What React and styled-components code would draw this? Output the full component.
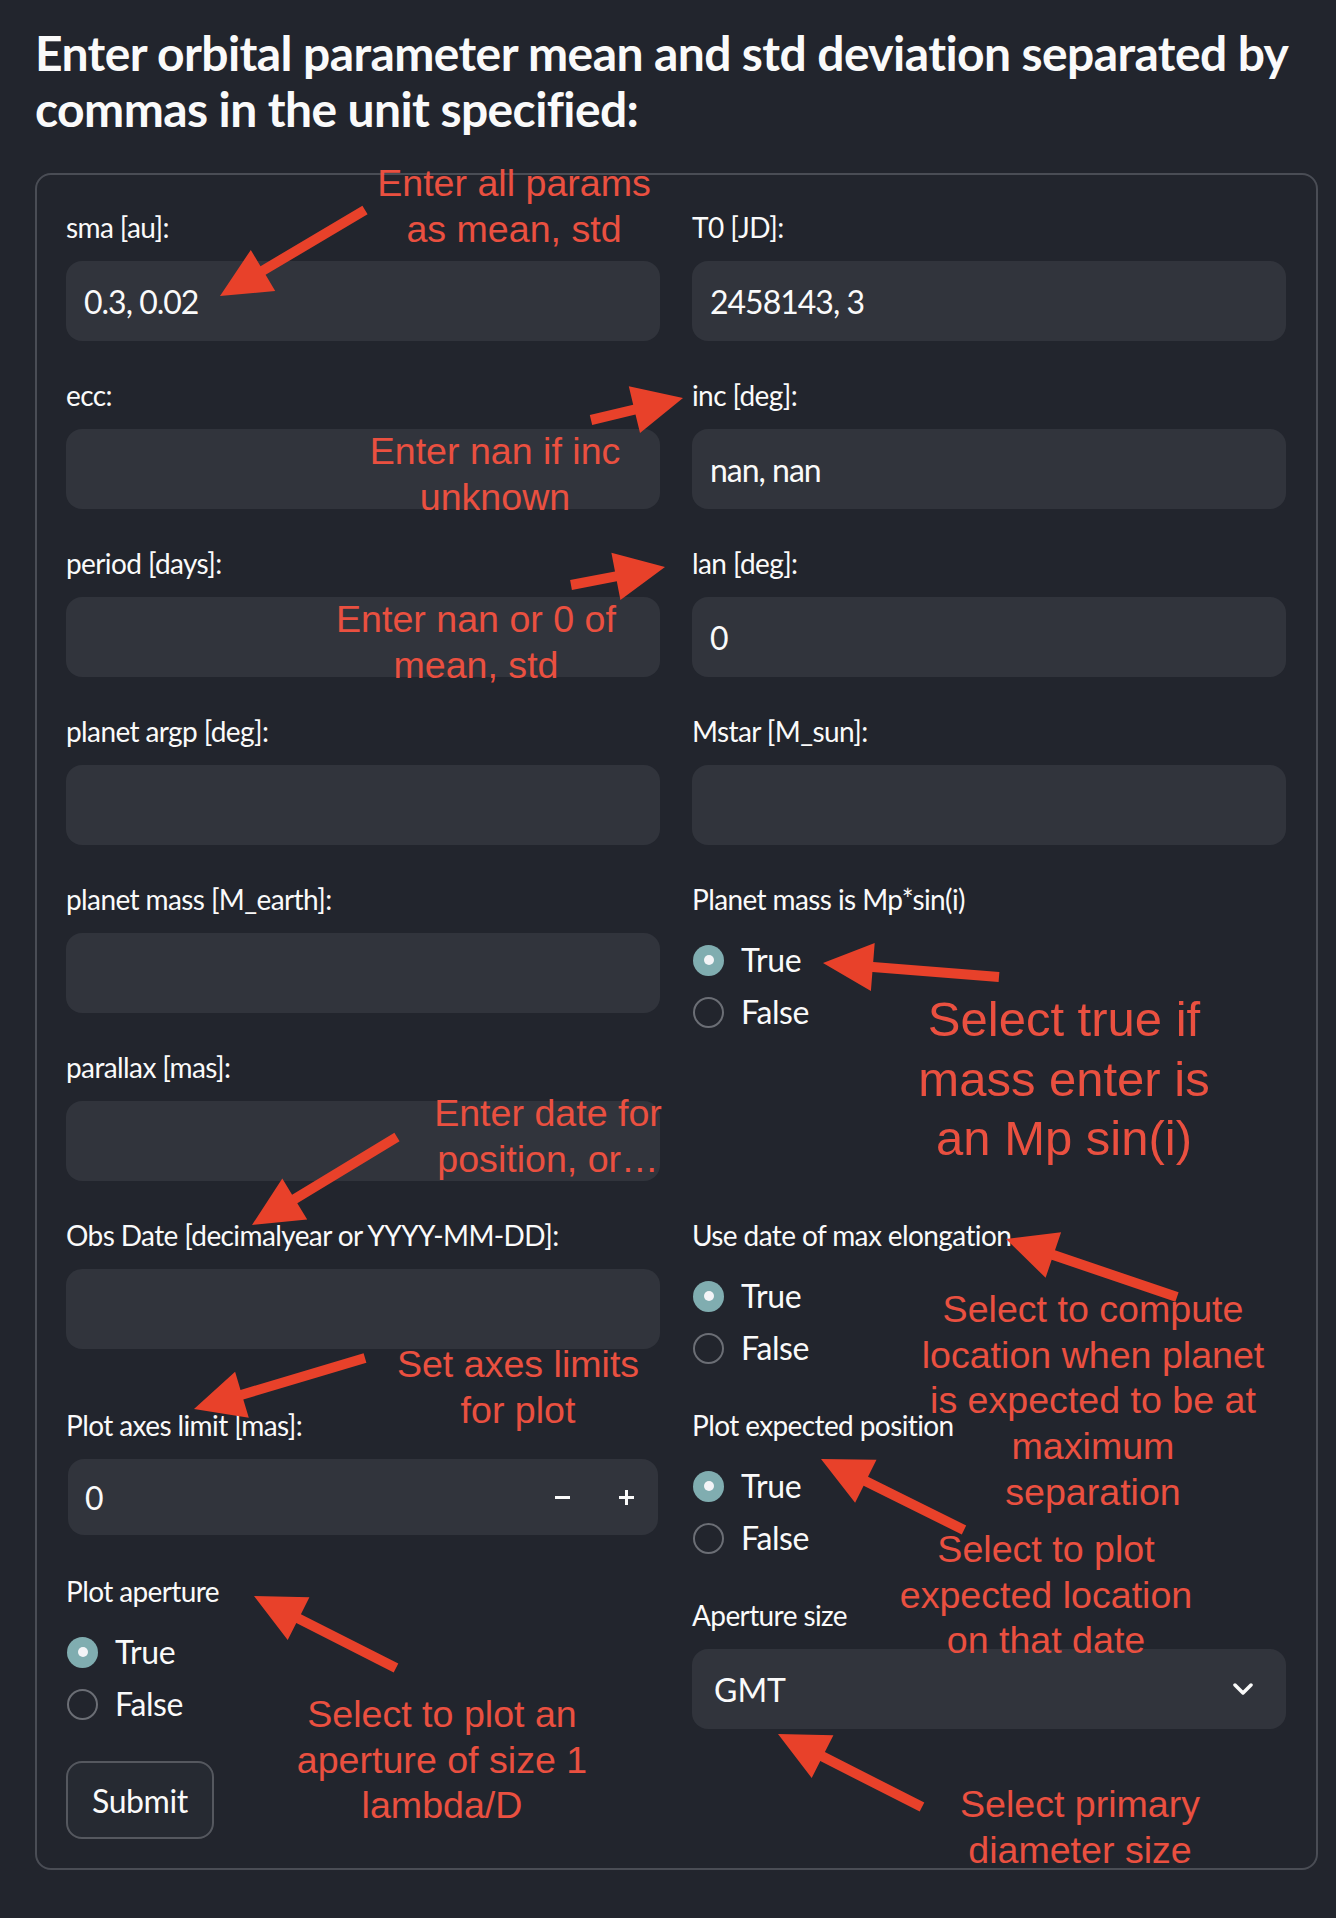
import React from 'react';
import styled, { createGlobalStyle } from 'styled-components';

const GlobalStyle = createGlobalStyle`
  html, body {
    margin: 0;
    padding: 0;
    background: #22252d;
  }
  body {
    font-family: Lato, "Noto Sans", sans-serif;
    color: #fafafa;
  }
  * {
    box-sizing: border-box;
  }
`;

const Page = styled.div`
  position: relative;
  width: 1336px;
  min-height: 1918px;
  padding: 25px 18px 0 35px;
`;

const Title = styled.h3`
  margin: 0 0 36px;
  font-size: 48px;
  line-height: 56px;
  font-weight: 700;
  letter-spacing: -0.6px;
  white-space: nowrap;
`;

const Form = styled.form`
  display: flex;
  flex-direction: column;
  gap: 32px;
  padding: 30px 30px 29px 29px;
  border: 2px solid #4a4d55;
  border-radius: 16px;
`;

const Columns = styled.div`
  display: grid;
  grid-template-columns: 1fr 1fr;
  column-gap: 32px;
  align-items: start;
`;

const Column = styled.div`
  display: flex;
  flex-direction: column;
  gap: 32px;
  min-width: 0;
`;

const Label = styled.div`
  height: 44px;
  margin-bottom: 12px;
  font-size: 28px;
  line-height: 44px;
  letter-spacing: -0.6px;
  white-space: nowrap;
`;

const TextBox = styled.input`
  display: block;
  width: 100%;
  height: 80px;
  padding: 0 18px;
  border: none;
  border-radius: 16px;
  outline: none;
  background: #31343c;
  color: #fafafa;
  font-family: inherit;
  font-size: 32px;
  letter-spacing: -1px;
`;

const NumberBox = styled.div`
  display: flex;
  align-items: center;
  height: 76px;
  margin: 2px;
  padding-left: 17px;
  border-radius: 16px;
  background: #31343c;
`;

const NumberValue = styled.span`
  flex: 1;
  font-size: 32px;
`;

const StepButton = styled.button`
  display: flex;
  align-items: center;
  justify-content: center;
  width: 64px;
  height: 100%;
  padding: 0;
  border: none;
  background: transparent;
  color: #fafafa;
`;

const SelectBox = styled.div`
  display: flex;
  align-items: center;
  justify-content: space-between;
  height: 80px;
  padding: 0 33px 0 22px;
  border-radius: 16px;
  background: #31343c;
  font-size: 32px;
`;

const Options = styled.div`
  display: flex;
  flex-direction: column;
  gap: 6px;
  padding-top: 4px;
`;

const Option = styled.div`
  display: flex;
  align-items: center;
  height: 46px;
  font-size: 32px;
  line-height: 46px;
  letter-spacing: -0.4px;
`;

const Dot = styled.span`
  display: flex;
  align-items: center;
  justify-content: center;
  flex: none;
  width: 31px;
  height: 31px;
  margin: 0 17px 0 1px;
  border-radius: 50%;
  border: ${(p) => (p.$on ? 'none' : '2px solid #6b6e75')};
  background: ${(p) => (p.$on ? '#80adb0' : 'transparent')};

  &::after {
    content: '';
    display: ${(p) => (p.$on ? 'block' : 'none')};
    width: 10px;
    height: 10px;
    border-radius: 50%;
    background: #f3f4f7;
  }
`;

const SubmitButton = styled.button`
  align-self: flex-start;
  height: 78px;
  padding: 0 24px;
  border: 2px solid #55585f;
  border-radius: 16px;
  background: #262a32;
  color: #fafafa;
  font-family: inherit;
  font-size: 32px;
  letter-spacing: -0.4px;
`;

const Overlay = styled.svg`
  position: absolute;
  left: 0;
  top: 0;
  pointer-events: none;
`;

const Note = styled.div`
  position: absolute;
  left: ${(p) => p.$x}px;
  top: ${(p) => p.$y}px;
  transform: translateX(-50%);
  font-family: "Liberation Sans", Arial, sans-serif;
  font-size: ${(p) => (p.$big ? '49px' : '37.6px')};
  line-height: ${(p) => (p.$big ? '59.5px' : '45.7px')};
  color: #ea5040;
  text-align: center;
  white-space: nowrap;
  pointer-events: none;
`;

const notes = [
  { x: 514, y: 161, lines: ['Enter all params', 'as mean, std'] },
  { x: 495, y: 429, lines: ['Enter nan if inc', 'unknown'] },
  { x: 476, y: 597, lines: ['Enter nan or 0 of', 'mean, std'] },
  { x: 1064, y: 990, big: true, lines: ['Select true if', 'mass enter is', 'an Mp sin(i)'] },
  { x: 548, y: 1091, lines: ['Enter date for', 'position, or…'] },
  {
    x: 1093,
    y: 1287,
    lines: ['Select to compute', 'location when planet', 'is expected to be at', 'maximum', 'separation'],
  },
  { x: 518, y: 1342, lines: ['Set axes limits', 'for plot'] },
  { x: 1046, y: 1527, lines: ['Select to plot', 'expected location', 'on that date'] },
  { x: 442, y: 1692, lines: ['Select to plot an', 'aperture of size 1', 'lambda/D'] },
  { x: 1080, y: 1782, lines: ['Select primary', 'diameter size'] },
];

// tail -> tip, in page pixels
const arrows = [
  [365, 210, 220, 296],
  [591, 420, 683, 398],
  [571, 585, 665, 567],
  [999, 977, 823, 963],
  [397, 1137, 252, 1225],
  [1177, 1297, 1006, 1239],
  [365, 1358, 194, 1409],
  [964, 1530, 821, 1459],
  [396, 1668, 254, 1596],
  [922, 1807, 778, 1734],
];

const arrowPoints = ([x1, y1, x2, y2]) => {
  const len = Math.hypot(x2 - x1, y2 - y1);
  const ux = (x2 - x1) / len;
  const uy = (y2 - y1) / len;
  const nx = -uy;
  const ny = ux;
  const head = 50;
  const half = 24;
  const shaft = 5;
  const bx = x2 - ux * head;
  const by = y2 - uy * head;
  const pts = [
    [x1 + nx * shaft, y1 + ny * shaft],
    [bx + nx * shaft, by + ny * shaft],
    [bx + nx * half, by + ny * half],
    [x2, y2],
    [bx - nx * half, by - ny * half],
    [bx - nx * shaft, by - ny * shaft],
    [x1 - nx * shaft, y1 - ny * shaft],
  ];
  return pts.map((p) => p.map((v) => v.toFixed(1)).join(',')).join(' ');
};

const TextField = ({ label, value = '' }) => (
  <div>
    <Label>{label}</Label>
    <TextBox type="text" value={value} readOnly />
  </div>
);

const Radio = ({ label }) => (
  <div>
    <Label>{label}</Label>
    <Options>
      <Option>
        <Dot $on />
        True
      </Option>
      <Option>
        <Dot />
        False
      </Option>
    </Options>
  </div>
);

const NumberField = ({ label, value }) => (
  <div>
    <Label>{label}</Label>
    <NumberBox>
      <NumberValue>{value}</NumberValue>
      <StepButton type="button">
        <svg width="17" height="17" viewBox="0 0 17 17">
          <path d="M1 8.5h15" stroke="currentColor" strokeWidth="3" />
        </svg>
      </StepButton>
      <StepButton type="button">
        <svg width="17" height="17" viewBox="0 0 17 17">
          <path d="M1 8.5h15M8.5 1v15" stroke="currentColor" strokeWidth="3" />
        </svg>
      </StepButton>
    </NumberBox>
  </div>
);

const SelectField = ({ label, value }) => (
  <div>
    <Label>{label}</Label>
    <SelectBox>
      <span>{value}</span>
      <svg width="20" height="12" viewBox="0 0 20 12">
        <polyline
          points="2,2 10,10 18,2"
          fill="none"
          stroke="currentColor"
          strokeWidth="3.5"
          strokeLinecap="round"
          strokeLinejoin="round"
        />
      </svg>
    </SelectBox>
  </div>
);

export default function App() {
  return (
    <Page>
      <GlobalStyle />
      <Title>
        Enter orbital parameter mean and std deviation separated by
        <br />
        commas in the unit specified:
      </Title>
      <Form onSubmit={(ev) => ev.preventDefault()}>
        <Columns>
          <Column>
            <TextField label="sma [au]:" value="0.3, 0.02" />
            <TextField label="ecc:" />
            <TextField label="period [days]:" />
            <TextField label="planet argp [deg]:" />
            <TextField label="planet mass [M_earth]:" />
            <TextField label="parallax [mas]:" />
          </Column>
          <Column>
            <TextField label="T0 [JD]:" value="2458143, 3" />
            <TextField label="inc [deg]:" value="nan, nan" />
            <TextField label="lan [deg]:" value="0" />
            <TextField label="Mstar [M_sun]:" />
            <Radio label="Planet mass is Mp*sin(i)" />
          </Column>
        </Columns>
        <Columns>
          <Column>
            <TextField label="Obs Date [decimalyear or YYYY-MM-DD]:" />
          </Column>
          <Column>
            <Radio label="Use date of max elongation" />
          </Column>
        </Columns>
        <Columns>
          <Column>
            <NumberField label="Plot axes limit [mas]:" value="0" />
            <Radio label="Plot aperture" />
          </Column>
          <Column>
            <Radio label="Plot expected position" />
            <SelectField label="Aperture size" value="GMT" />
          </Column>
        </Columns>
        <SubmitButton type="submit">Submit</SubmitButton>
      </Form>

      {notes.map((n) => (
        <Note key={n.lines[0]} $x={n.x} $y={n.y} $big={n.big}>
          {n.lines.map((line) => (
            <div key={line}>{line}</div>
          ))}
        </Note>
      ))}
      <Overlay width="1336" height="1918" viewBox="0 0 1336 1918">
        {arrows.map((a) => (
          <polygon key={a.join('-')} points={arrowPoints(a)} fill="#e8412a" />
        ))}
      </Overlay>
    </Page>
  );
}
